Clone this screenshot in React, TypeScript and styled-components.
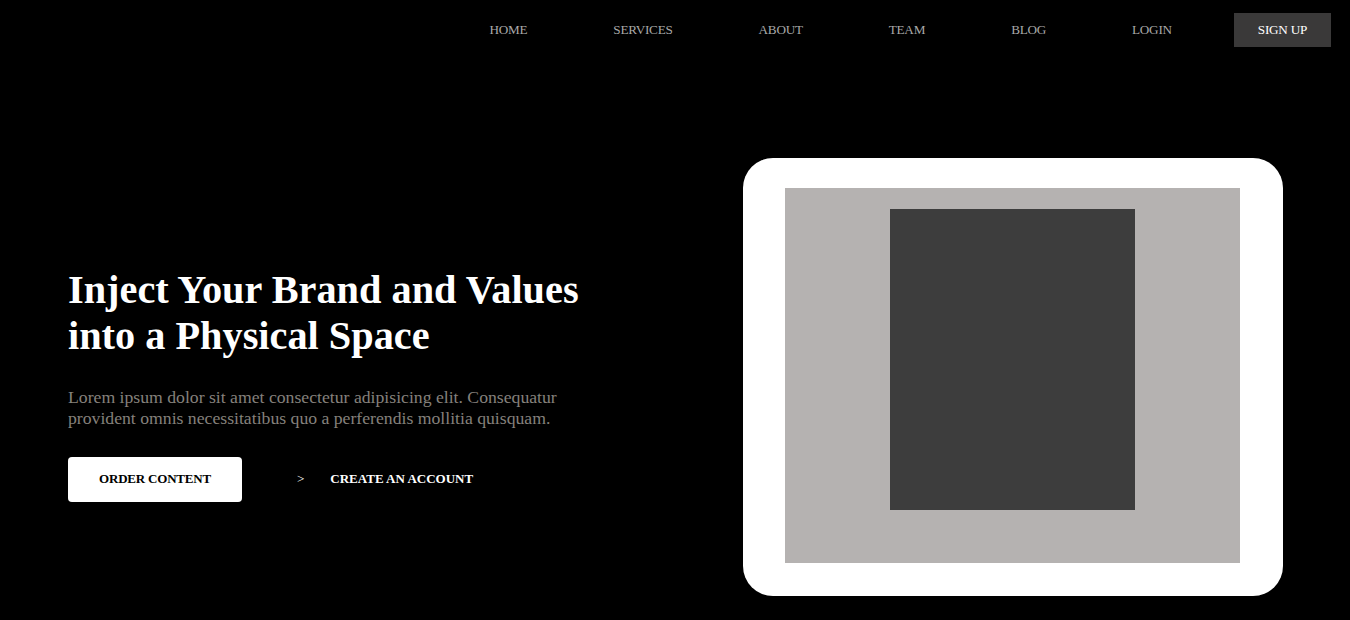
import React from "react";
import styled, { createGlobalStyle } from "styled-components";

const Global = createGlobalStyle`
  html, body { margin: 0; padding: 0; background: #000; }
  body { font-family: "Liberation Serif", "Times New Roman", serif; }
  * { box-sizing: border-box; }
`;

const Page = styled.div`
  width: 1350px;
  height: 620px;
  background: #000;
  overflow: hidden;
`;

const Header = styled.nav`
  display: flex;
  justify-content: flex-end;
  align-items: center;
  gap: 38px;
  padding: 13px 19px 0 0;
`;

const NavLink = styled.a<{ $primary?: boolean }>`
  display: flex;
  align-items: center;
  height: 34px;
  padding: 0 24px;
  font-size: 13.2px;
  color: ${(p) => (p.$primary ? "#ffffff" : "#a8a8a8")};
  background: ${(p) => (p.$primary ? "#3a3939" : "transparent")};
  text-decoration: none;
  text-transform: uppercase;
  letter-spacing: -0.25px;
`;

const Hero = styled.section`
  display: flex;
  justify-content: space-between;
  align-items: center;
  padding: 111px 67px 0 68px;
`;

const Copy = styled.div`
  display: flex;
  flex-direction: column;
  width: 560px;
  padding-top: 14px;
`;

const Title = styled.h1`
  margin: 0;
  font-size: 40.3px;
  line-height: 46px;
  font-weight: 700;
  color: #ffffff;
`;

const Lead = styled.p`
  margin: 28px 0 0;
  font-size: 17.7px;
  line-height: 21px;
  color: #85817c;
`;

const Actions = styled.div`
  display: flex;
  align-items: center;
  margin-top: 28px;
`;

const PrimaryButton = styled.button`
  width: 174px;
  height: 45px;
  border: none;
  border-radius: 4px;
  background: #fff;
  color: #000;
  font-family: inherit;
  font-size: 13px;
  font-weight: 700;
  letter-spacing: -0.2px;
  cursor: pointer;
`;

const LinkButton = styled.a`
  display: flex;
  align-items: center;
  margin-left: 55px;
  color: #fff;
  font-size: 13px;
  font-weight: 700;
  text-decoration: none;
`;

const Arrow = styled.span`
  font-weight: 400;
  margin-right: 26px;
`;

const Frame = styled.div`
  width: 540px;
  height: 438px;
  flex-shrink: 0;
  background: #fff;
  border-radius: 30px;
  padding: 30px 43px 33px 42px;
`;

const Screen = styled.div`
  height: 100%;
  background: #b5b2b1;
  display: flex;
  justify-content: center;
  padding-top: 21px;
`;

const Block = styled.div`
  width: 245px;
  height: 301px;
  background: #3d3d3d;
`;

export default function App() {
  const links = ["Home", "Services", "About", "Team", "Blog", "Login"];
  return (
    <Page>
      <Global />
      <Header>
        {links.map((l) => (
          <NavLink key={l} href="#">
            {l}
          </NavLink>
        ))}
        <NavLink href="#" $primary>
          Sign Up
        </NavLink>
      </Header>
      <Hero>
        <Copy>
          <Title>
            Inject Your Brand and Values
            <br />
            into a Physical Space
          </Title>
          <Lead>
            Lorem ipsum dolor sit amet consectetur adipisicing elit. Consequatur
            <br />
            provident omnis necessitatibus quo a perferendis mollitia quisquam.
          </Lead>
          <Actions>
            <PrimaryButton>ORDER CONTENT</PrimaryButton>
            <LinkButton href="#">
              <Arrow>&gt;</Arrow>
              CREATE AN ACCOUNT
            </LinkButton>
          </Actions>
        </Copy>
        <Frame>
          <Screen>
            <Block />
          </Screen>
        </Frame>
      </Hero>
    </Page>
  );
}
